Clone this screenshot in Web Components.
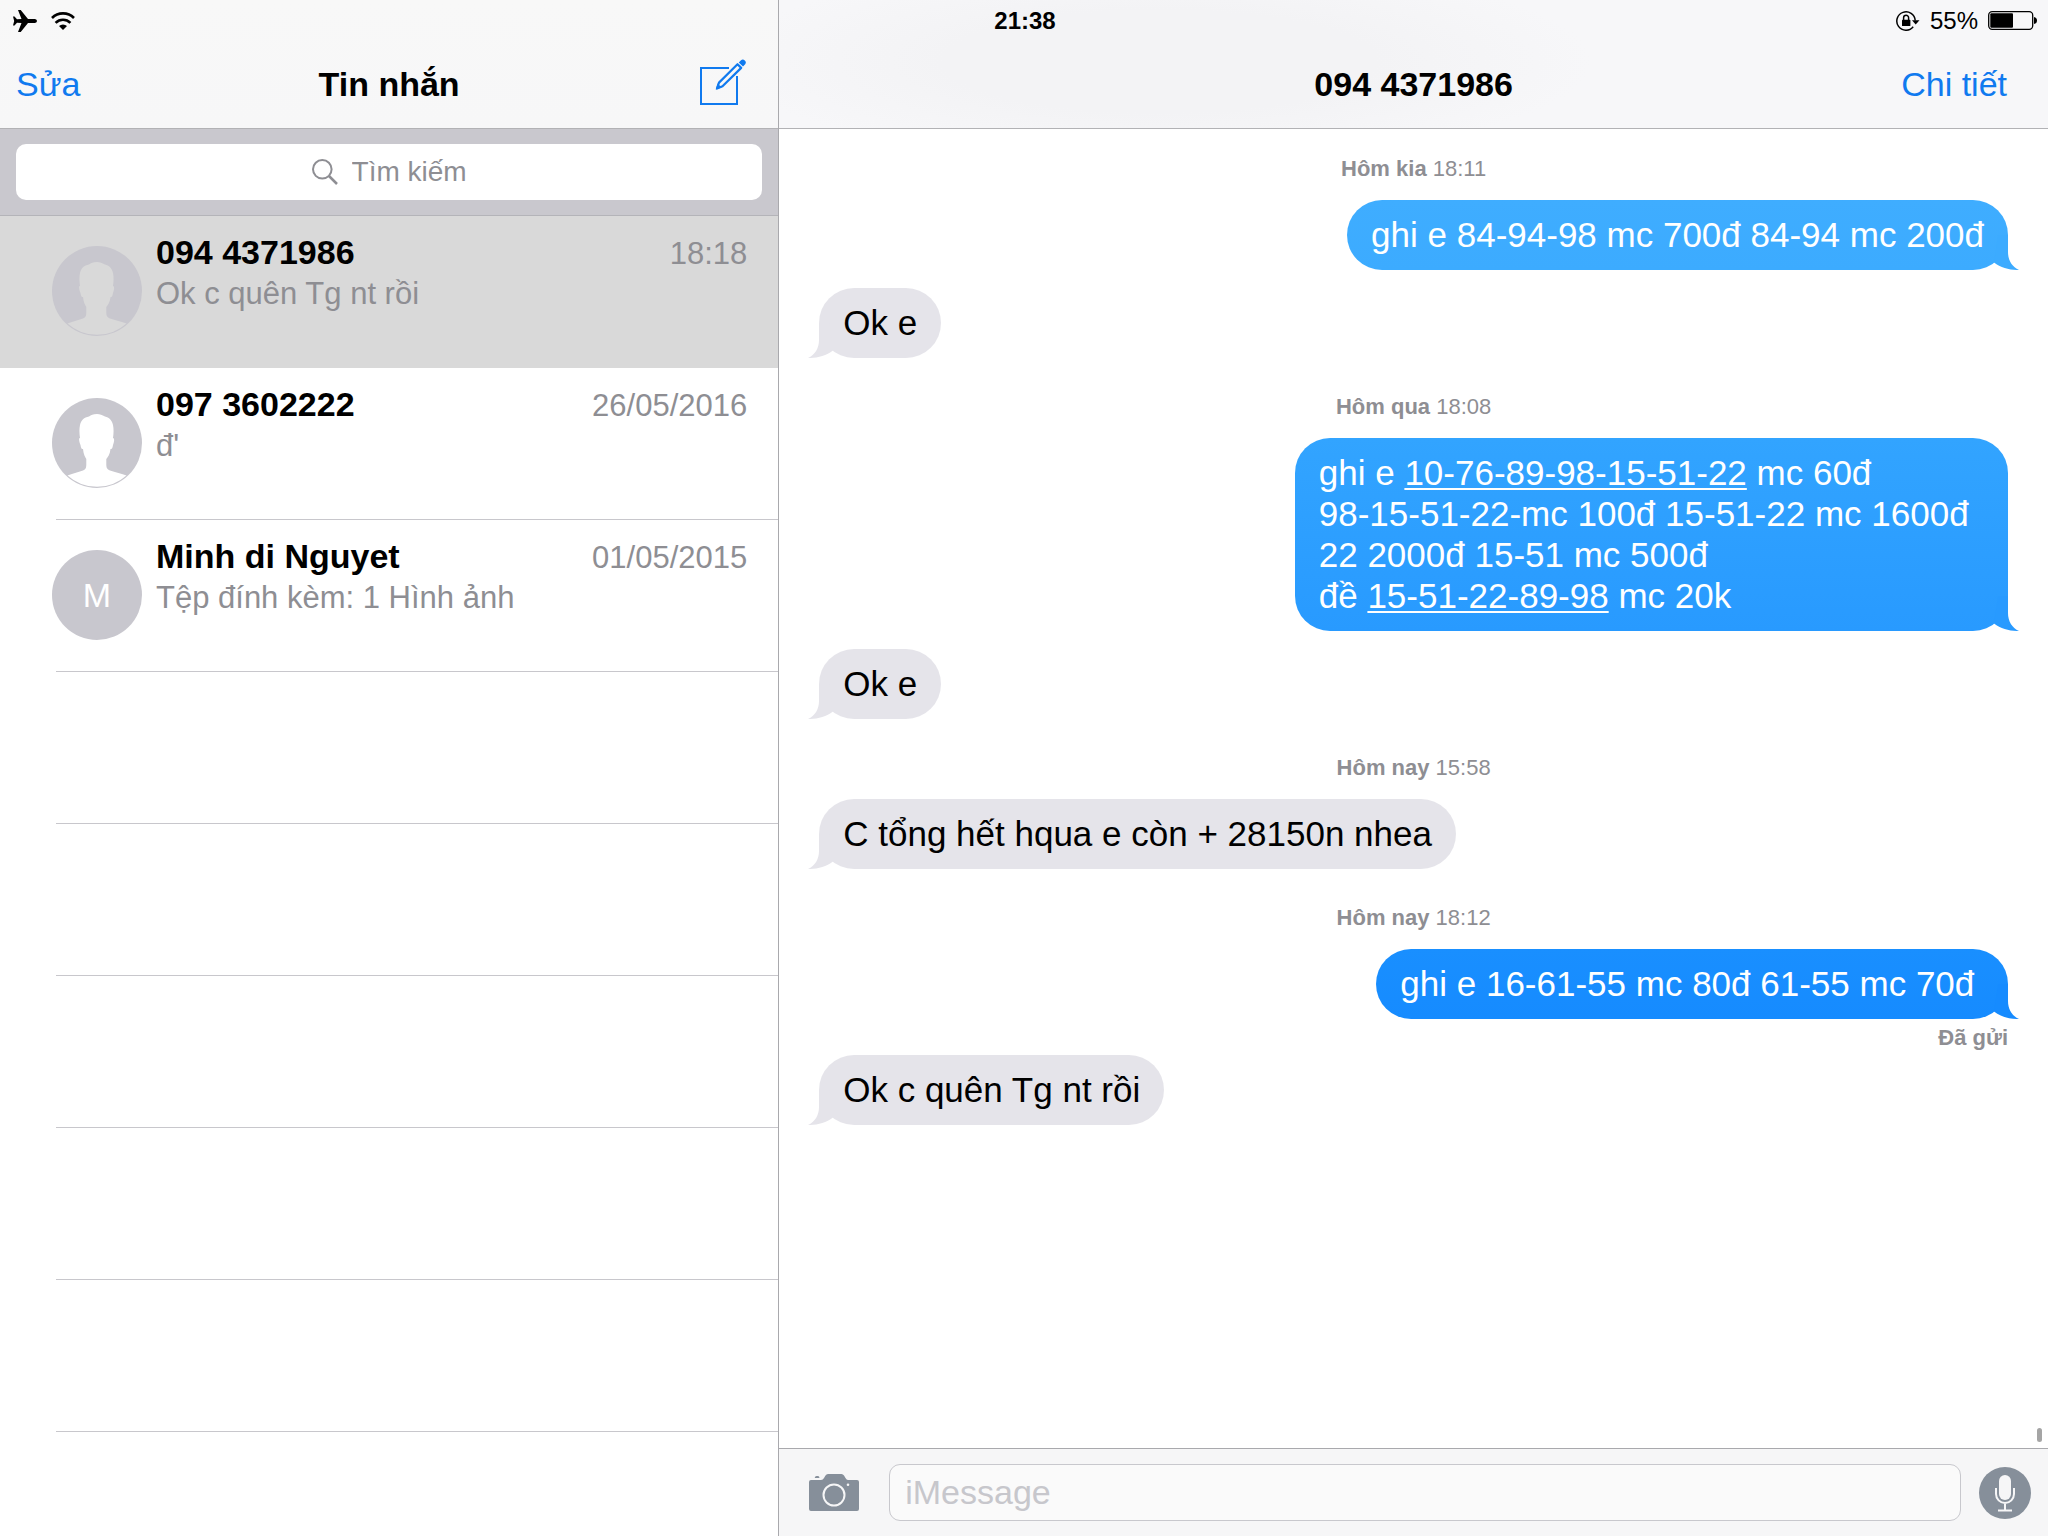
<!DOCTYPE html>
<html lang="vi">
<head>
<meta charset="utf-8">
<meta name="viewport" content="width=device-width, initial-scale=1">
<title>Tin nhắn</title>
<style>
  body { margin: 0; font-family: "Liberation Sans", Arial, sans-serif; color: #000; background: #fff; }
</style>
</head>
<body>
<messages-app>
  <status-bar slot="status" time="21:38" battery="55"></status-bar>

  <conversation-list slot="list" heading="Tin nhắn">
    <conversation-row name="094 4371986" when="18:18" preview="Ok c quên Tg nt rồi" selected></conversation-row>
    <conversation-row name="097 3602222" when="26/05/2016" preview="đ'"></conversation-row>
    <conversation-row name="Minh di Nguyet" when="01/05/2015" preview="Tệp đính kèm: 1 Hình ảnh" initial="M"></conversation-row>
    <blank-row></blank-row>
    <blank-row></blank-row>
    <blank-row></blank-row>
    <blank-row></blank-row>
    <blank-row></blank-row>
  </conversation-list>

  <chat-thread slot="thread" heading="094 4371986">
    <time-stamp day="Hôm kia" time="18:11"></time-stamp>
    <message-bubble sent style="--from:#3fadff;--to:#3cabff">ghi e 84-94-98 mc 700đ 84-94 mc 200đ</message-bubble>
    <message-bubble>Ok e</message-bubble>
    <time-stamp day="Hôm qua" time="18:08"></time-stamp>
    <message-bubble sent style="--from:#32a4ff;--to:#289aff">ghi e <a href="#a">10-76-89-98-15-51-22</a> mc 60đ<br>98-15-51-22-mc 100đ 15-51-22 mc 1600đ 22 2000đ 15-51 mc 500đ<br>đề <a href="#b">15-51-22-89-98</a> mc 20k</message-bubble>
    <message-bubble>Ok e</message-bubble>
    <time-stamp day="Hôm nay" time="15:58"></time-stamp>
    <message-bubble>C tổng hết hqua e còn + 28150n nhea</message-bubble>
    <time-stamp day="Hôm nay" time="18:12"></time-stamp>
    <message-bubble sent style="--from:#198fff;--to:#168bff">ghi e 16-61-55 mc 80đ 61-55 mc 70đ&nbsp;</message-bubble>
    <delivery-receipt>Đã gửi</delivery-receipt>
    <message-bubble>Ok c quên Tg nt rồi</message-bubble>
    <message-composer slot="composer"></message-composer>
  </chat-thread>
</messages-app>

<script>
const define = (name, render) => customElements.define(name, class extends HTMLElement {
  constructor() {
    super();
    this.attachShadow({ mode: 'open' });
  }
  connectedCallback() {
    this.shadowRoot.innerHTML = render(this);
  }
});

define('messages-app', () => `
  <style>
    :host { display: grid; grid-template-columns: 38% minmax(0, 1fr); min-height: 100vh; position: relative; }
    ::slotted([slot=status]) { position: absolute; top: 0; left: 0; right: 0; z-index: 1; }
  </style>
  <slot name="status"></slot>
  <slot name="list"></slot>
  <slot name="thread"></slot>
`);

define('status-bar', el => `
  <style>
    :host { display: grid; grid-template-columns: 1fr auto 1fr; align-items: center; height: 41px;
            padding: 0 11px 0 13px; box-sizing: border-box; font-size: 24px; pointer-events: none; }
    div { display: flex; align-items: center; }
    .left { gap: 14px; }
    .right { justify-content: flex-end; gap: 10px; }
    svg { display: block; }
  </style>
  <div class="left">
    <svg width="24" height="22" viewBox="0 0 24 22"><path d="M5 0H7.7L15 9H22Q24 9.300 24 11Q24 12.700 22 13H15L7.700 22H5L8.500 13L4 12.700L1.500 15.500H0L1.200 11L0 6.500H1.500L4 9.300L8.500 9Z"/></svg>
    <svg width="24" height="18" viewBox="0 0 24 18"><g fill="none" stroke="#000" stroke-width="2.600"><path d="M1 6A15.500 15.500 0 0 1 23 6"/><path d="M4.600 10.800A10.400 10.400 0 0 1 19.400 10.800"/></g><path d="M12 18L8 14A5.800 5.800 0 0 1 16 14Z"/></svg>
  </div>
  <strong>${el.getAttribute('time')}</strong>
  <div class="right">
    <svg width="24" height="20" viewBox="0 0 24 20"><path d="M17.200 15.800A9.200 9.200 0 1 1 19.200 9.500" fill="none" stroke="#000" stroke-width="1.500"/><path d="M16 9.300H23.500L19.700 13.500Z"/><rect x="6" y="8.800" width="8.400" height="6.200" rx=".6"/><path d="M7.600 9V6.800A2.500 2.500 0 0 1 12.600 6.800V9" fill="none" stroke="#000" stroke-width="1.500"/></svg>
    <span>${el.getAttribute('battery')}%</span>
    <svg width="49" height="19" viewBox="0 0 49 19"><rect x=".7" y=".7" width="44" height="17.600" rx="3.500" fill="none" stroke="#000" stroke-width="1.300"/><rect x="2.300" y="2.300" width="22.700" height="14.400" rx="1"/><path d="M46 6Q49 6.500 49 9.500Q49 12.500 46 13Z"/></svg>
  </div>
`);

define('nav-bar', el => `
  <style>
    :host { display: grid; grid-template-columns: 1fr auto 1fr; align-items: center; height: 129px;
            box-sizing: border-box; padding-top: 40px; border-bottom: 1px solid #b2b2b5;
            background: var(--nav-bg, #f8f8f8); font-size: 34px; }
    h1 { margin: 0; font-size: 34px; line-height: 40px; }
    .start { padding-left: 16px; }
    .end { display: flex; justify-content: flex-end; padding-right: var(--nav-end); }
  </style>
  <div class="start"><slot name="start"></slot></div>
  <h1>${el.getAttribute('heading')}</h1>
  <div class="end"><slot name="end"></slot></div>
`);

const buttonCss = `button { display: block; margin: 0; padding: 0; border: 0; background: none; font: inherit;
  line-height: 40px; color: #107aef; cursor: pointer; } svg { display: block; }`;

define('conversation-list', el => `
  <style>
    :host { display: block; }
    ${buttonCss}
    nav-bar { --nav-end: 32px; --nav-bg: linear-gradient(#f8f8f8, #f7f7f8); }
    nav-bar svg { margin-bottom: 4px; }
    .search { padding: 15px 16px; background: #c9c8ce; border-bottom: 1px solid #b4b4b9; }
    label { display: flex; align-items: center; justify-content: center; gap: 14px; height: 56px;
            border-radius: 10px; background: #fff; }
    input { field-sizing: content; width: auto; min-width: 0; padding: 0; border: 0; outline: 0;
            background: none; font: 28px "Liberation Sans", Arial, sans-serif; }
    input::placeholder { color: #8e8e93; opacity: 1; }
  </style>
  <nav-bar heading="${el.getAttribute('heading')}">
    <button slot="start">Sửa</button>
    <button slot="end" aria-label="Tin nhắn mới">
      <svg width="46" height="47" viewBox="0 0 46 47"><g fill="none" stroke="#107aef"><path d="M29 9H1V45H37V17" stroke-width="2"/><path d="M17 29.500L19 23.600L37.500 5.200L41.200 8.900L22.500 27.300Z" stroke-width="2.200" stroke-linejoin="round"/></g><path d="M15.700 30.400L17.600 24.500L21.700 28.500ZM38.800 3.400L41 1.200Q43 -.3 44.800 1.500Q46.700 3.400 45.200 5.300L43 7.500Z" fill="#107aef"/></svg>
    </button>
  </nav-bar>
  <div class="search">
    <label>
      <svg width="26" height="26" viewBox="0 0 26 26" fill="none" stroke="#8e8e93" stroke-width="2"><circle cx="10.300" cy="10.300" r="9.300"/><path d="M17 17L25 25" stroke-width="2.500"/></svg>
      <input type="text" placeholder="Tìm kiếm" aria-label="Tìm kiếm">
    </label>
  </div>
  <slot></slot>
`);

define('contact-avatar', el => `
  <style>
    :host { display: grid; place-items: center; width: 90px; height: 90px; border-radius: 50%;
            background: #c8c7ce; color: #fff; font-size: 34px; }
    svg { display: block; }
  </style>
  ${el.getAttribute('initial') || `<svg width="90" height="90" viewBox="0 0 90 90"><path fill="var(--row-bg)" d="M45 16C41 16 39 17 37 18.500C32 19.500 29 22 28 27C27 32 27.500 36 28 40C26.500 40 27 43 28.500 47C29 50 29.500 51.500 31 51C31.500 56 33 59 34.300 61V67C34 70 34 71 31 72.500C26 74.500 20 75.500 15.500 77.500A44 44 0 0 0 74.500 77.500C70 75.500 63 74.500 58 72.500C55 71 54.500 70 54.300 67V61C56 59 58 56 58.500 51C60 51.500 60.500 50 61 47C62.500 43 62.500 40 61 40C61.500 36 62 32 61 27C60 22 57 19.500 53 18.500C50 17 48 16 45 16Z"/></svg>`}
`);

define('conversation-row', el => `
  <style>
    :host { --row-bg: #fff; display: block; padding-left: 56px; background: var(--row-bg); }
    :host([selected]) { --row-bg: #d9d9d9; }
    article { display: flex; gap: 14px; height: 152px; box-sizing: border-box; padding: 16px 31px 0 0;
              border-bottom: 1px solid #c8c7cc; }
    :host([selected]) article { border-color: transparent; }
    contact-avatar { flex: none; margin: 14px 0 0 -4px; }
    .text { flex: 1; min-width: 0; display: flex; flex-direction: column; gap: 2px; }
    .top { display: flex; justify-content: space-between; align-items: baseline; }
    h2, p { margin: 0; line-height: 40px; }
    h2 { font-size: 34px; }
    time, p { font-size: 31px; color: #8e8e93; }
  </style>
  <article>
    <contact-avatar initial="${el.getAttribute('initial') || ''}"></contact-avatar>
    <div class="text">
      <div class="top"><h2>${el.getAttribute('name')}</h2><time>${el.getAttribute('when')}</time></div>
      <p>${el.getAttribute('preview')}</p>
    </div>
  </article>
`);

define('blank-row', () => `
  <style>
    :host { display: block; height: 152px; box-sizing: border-box; margin-left: 56px; border-bottom: 1px solid #c8c7cc; }
  </style>
`);

define('chat-thread', el => `
  <style>
    :host { display: flex; flex-direction: column; border-left: 1px solid #a9a9ad; }
    ${buttonCss}
    nav-bar { --nav-end: 41px;
      --nav-bg: radial-gradient(ellipse 34% 80% at 30% 48%, #f3f3f5 50%, #f3f3f500), #f7f7f9; }
    section { flex: 1; display: flex; flex-direction: column; position: relative; padding: 27px 40px 0; }
    .thumb { position: absolute; right: 6px; bottom: 6px; width: 5px; height: 14px; border-radius: 3px; background: #a5a5a5; }
  </style>
  <nav-bar heading="${el.getAttribute('heading')}"><button slot="end">Chi tiết</button></nav-bar>
  <section><slot></slot><div class="thumb"></div></section>
  <slot name="composer"></slot>
`);

define('time-stamp', el => `
  <style>
    :host { display: block; margin-top: 36px; text-align: center; font-size: 22px; line-height: 26px; color: #8e8e93; }
    :host(:first-child) { margin-top: 0; }
  </style>
  <b>${el.getAttribute('day')}</b> <time>${el.getAttribute('time')}</time>
`);

define('message-bubble', () => `
  <style>
    :host { --from: #e5e4ea; --to: #e5e4ea; display: block; position: relative; align-self: flex-start;
            box-sizing: border-box; max-width: 60%; margin-top: 18px; padding: 14px 24px 15px;
            border-radius: 35px; background: linear-gradient(var(--from), var(--to));
            font-size: 35px; line-height: 41px; }
    :host([sent]) { align-self: flex-end; color: #fff; }
    ::slotted(a) { color: inherit; text-decoration: underline 2px; text-underline-offset: 3px; }
    svg { position: absolute; bottom: 0; left: -11px; transform: scaleX(-1); }
    :host([sent]) svg { left: auto; right: -11px; transform: none; }
  </style>
  <slot></slot>
  <svg width="36" height="35" viewBox="0 0 36 35"><path fill="var(--to)" d="M15 0H25V17C25 25 29 32 36 35C27 35.200 18 33 11 27.500Z"/></svg>
`);

define('delivery-receipt', () => `
  <style>
    :host { display: block; margin-bottom: -20px; text-align: right; font-size: 22px; font-weight: bold;
            line-height: 38px; color: #8e8e93; }
  </style>
  <slot></slot>
`);

define('message-composer', () => `
  <style>
    :host { display: block; border-top: 1px solid #a9a9ad; background: #f6f6f7; }
    form { display: flex; align-items: center; height: 87px; box-sizing: border-box; padding: 0 17px 0 30px; }
    ${buttonCss}
    input { flex: 1; min-width: 0; height: 57px; box-sizing: border-box; margin: 0 18px 0 30px; padding: 0 15px;
            border: 1px solid #c8c8cd; border-radius: 11px; outline: 0; background: #fafafa;
            font: 34px "Liberation Sans", Arial, sans-serif; }
    input::placeholder { color: #c7c7cc; opacity: 1; }
  </style>
  <form>
    <button type="button" aria-label="Máy ảnh">
      <svg width="50" height="37" viewBox="0 0 50 37"><path fill="#868f9a" d="M2 6H12Q14 6 15 4L16.500 1.500Q17.300 0 19 0H32.500Q34 0 35 1.500L36.500 4Q37.500 6 39 6H48Q50 6 50 8V35Q50 37 48 37H2Q0 37 0 35V8Q0 6 2 6ZM5.700 4Q6 2 7.500 2H9Q10.300 2 10.500 4Z"/><circle cx="25" cy="21" r="10.500" fill="none" stroke="#f6f6f7" stroke-width="2"/><circle cx="39" cy="10.800" r="1.300" fill="#f6f6f7"/></svg>
    </button>
    <input type="text" placeholder="iMessage" aria-label="iMessage">
    <button type="button" aria-label="Đọc chính tả">
      <svg width="52" height="52" viewBox="0 0 52 52"><circle cx="26" cy="26" r="26" fill="#868f9a"/><rect x="20" y="8" width="12" height="25" rx="6" fill="#f6f6f7"/><path d="M17 21V27A9 9 0 0 0 35 27V21M26 36V43.500M19 43.500H33" fill="none" stroke="#f6f6f7" stroke-width="2"/></svg>
    </button>
  </form>
`);
</script>
</body>
</html>
